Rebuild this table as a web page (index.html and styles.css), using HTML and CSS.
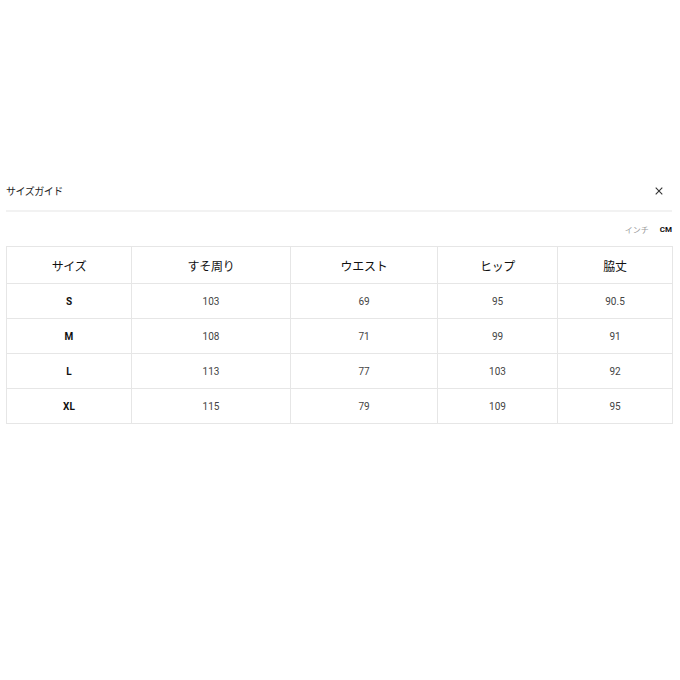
FILE: index.html
```html
<!DOCTYPE html>
<html lang="ja">
<head>
<meta charset="utf-8">
<link rel="stylesheet" href="styles.css">
</head>
<body>
<div class="guide">
  <div class="head">
    <span class="title">サイズガイド</span>
    <svg class="close" width="8" height="8" viewBox="0 0 8 8" aria-label="閉じる">
      <path d="M0.7 0.7 L7.3 7.3 M7.3 0.7 L0.7 7.3" stroke="#333" stroke-width="1.1" fill="none"/>
    </svg>
  </div>
  <div class="units">
    <span class="unit">インチ</span>
    <span class="unit active">CM</span>
  </div>
  <table class="sizes">
    <colgroup>
      <col class="c1"><col class="c2"><col class="c3"><col class="c4"><col class="c5">
    </colgroup>
    <thead>
      <tr><th>サイズ</th><th>すそ周り</th><th>ウエスト</th><th>ヒップ</th><th>脇丈</th></tr>
    </thead>
    <tbody>
      <tr><th>S</th><td>103</td><td>69</td><td>95</td><td>90.5</td></tr>
      <tr><th>M</th><td>108</td><td>71</td><td>99</td><td>91</td></tr>
      <tr><th>L</th><td>113</td><td>77</td><td>103</td><td>92</td></tr>
      <tr><th>XL</th><td>115</td><td>79</td><td>109</td><td>95</td></tr>
    </tbody>
  </table>
</div>
</body>
</html>
```
FILE: styles.css
```css
html, body {
  margin: 0;
  padding: 0;
  background: #fff;
}
body {
  font-family: Roboto, "Noto Sans CJK JP", sans-serif;
  color: #222;
}
.guide {
  padding: 182px 8px 0 6px;
}
.head {
  display: flex;
  justify-content: space-between;
  align-items: center;
  height: 17px;
  padding-bottom: 11px;
  border-bottom: 2px solid #f2f2f2;
}
.title {
  font-family: "Noto Sans CJK JP", sans-serif;
  font-size: 10px;
  font-weight: 400;
  color: #222;
  letter-spacing: -0.5px;
}
.close {
  display: block;
  margin-right: 9px;
}
.units {
  display: flex;
  justify-content: flex-end;
  align-items: center;
  gap: 11px;
  height: 14px;
  margin-top: 10px;
  margin-bottom: 10px;
}
.unit {
  font-family: "Noto Sans CJK JP", sans-serif;
  font-size: 8px;
  color: #999;
}
.unit.active {
  font-family: Roboto, sans-serif;
  font-weight: 700;
  color: #111;
}
.sizes {
  width: 666px;
  border-collapse: collapse;
  table-layout: fixed;
  border: 1px solid #e6e6e6;
}
.c1 { width: 125px; }
.c2 { width: 159px; }
.c3 { width: 147px; }
.c4 { width: 120px; }
.c5 { width: 115px; }
.sizes th, .sizes td {
  border: 1px solid #e6e6e6;
  text-align: center;
  padding: 0;
  height: 34px;
}
.sizes thead th {
  font-family: "Noto Sans CJK JP", sans-serif;
  font-size: 12px;
  font-weight: 400;
  color: #111;
  height: 36px;
  letter-spacing: -0.3px;
}
.sizes tbody th {
  font-family: Roboto, sans-serif;
  font-size: 10px;
  font-weight: 700;
  color: #111;
}
.sizes td {
  font-family: Roboto, sans-serif;
  font-size: 10px;
  color: #444;
}
```
